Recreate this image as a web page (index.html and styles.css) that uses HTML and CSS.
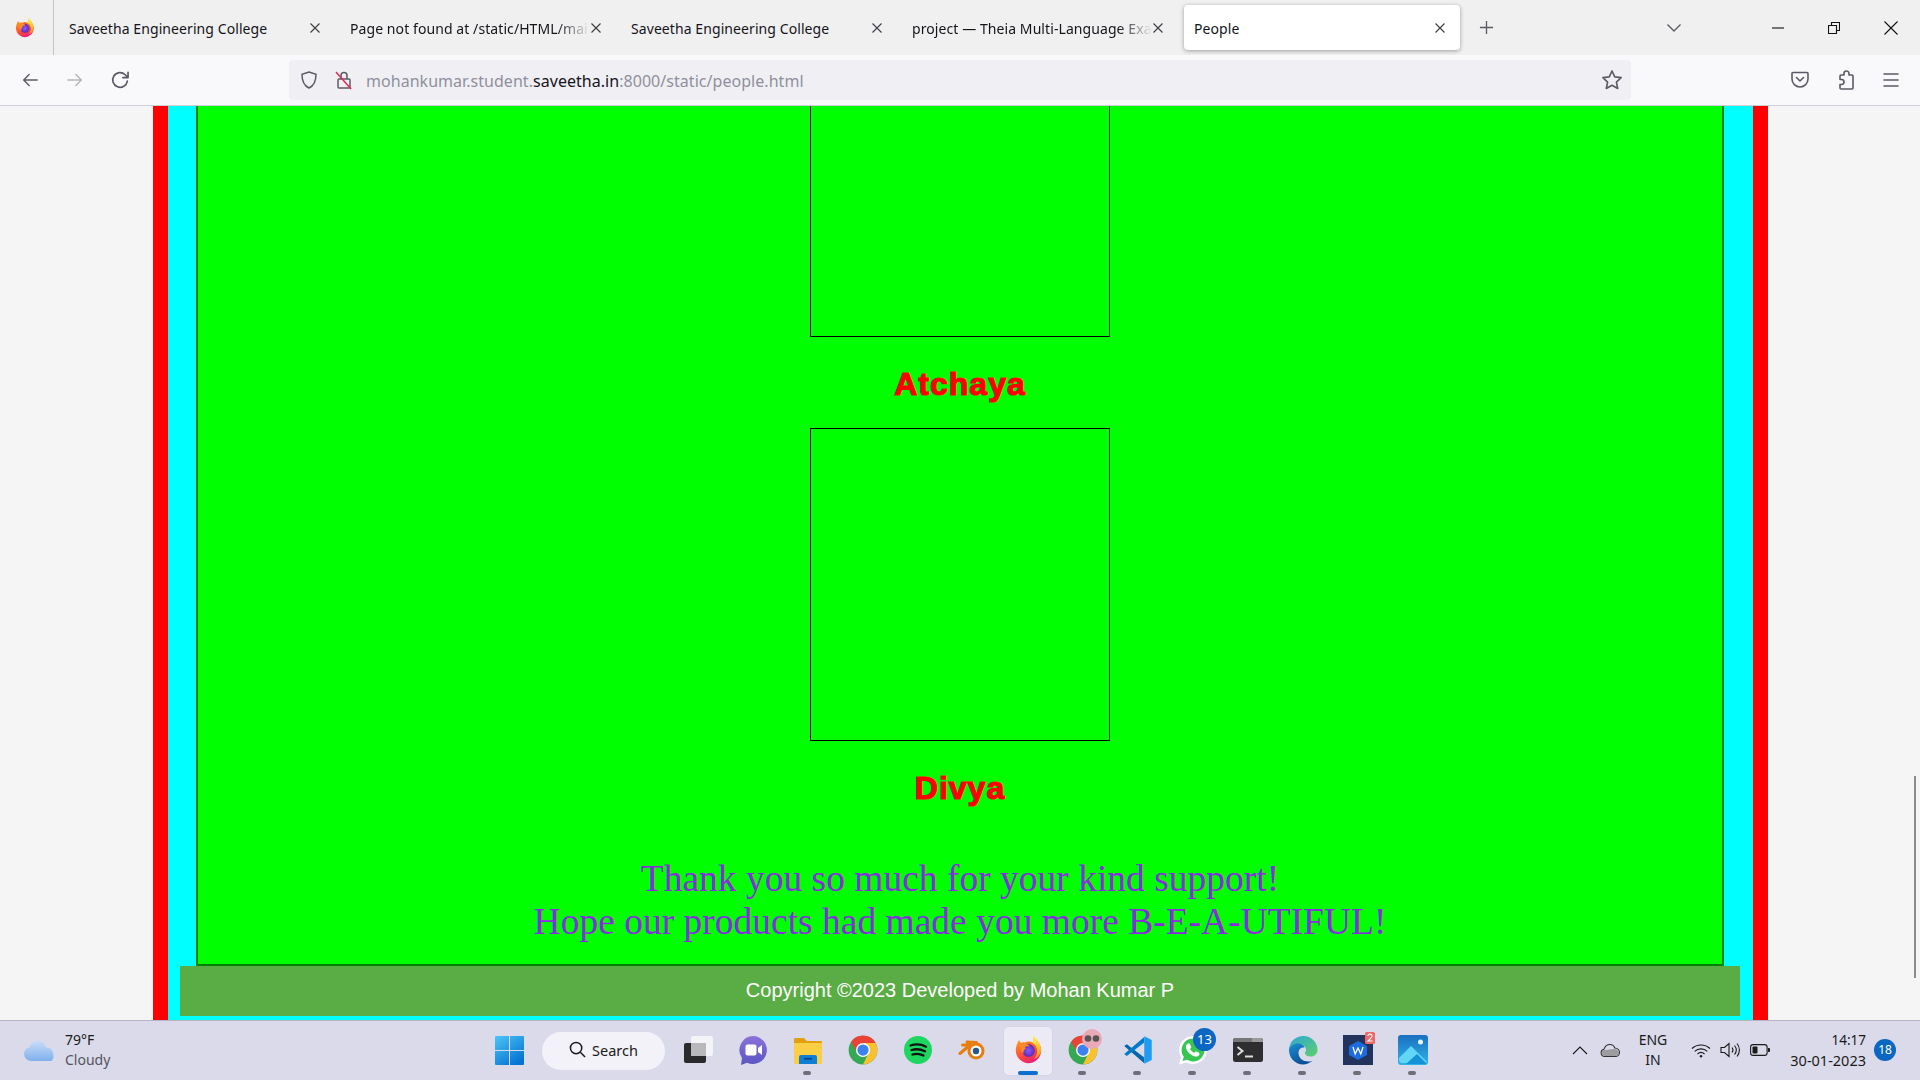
FILE: index.html
```html
<!DOCTYPE html>
<html lang="en">
<head>
<meta charset="utf-8">
<title>People</title>
<link rel="stylesheet" href="styles.css">
</head>
<body>
<svg class="sprite" aria-hidden="true">
  <defs>
    <linearGradient id="g-fox" x1="0.2" y1="0.2" x2="0.6" y2="1"><stop offset="0" stop-color="#ff8a1f"/><stop offset="0.55" stop-color="#ff4a3a"/><stop offset="1" stop-color="#e8207a"/></linearGradient>
    <linearGradient id="g-flame" x1="0.3" y1="0" x2="0.6" y2="1"><stop offset="0" stop-color="#fff44f"/><stop offset="0.6" stop-color="#ffc02a"/><stop offset="1" stop-color="#ff8a1f"/></linearGradient>
    <radialGradient id="g-globe"><stop offset="0" stop-color="#9059ff"/><stop offset="1" stop-color="#5b2bb5"/></radialGradient>
    <linearGradient id="g-win" x1="0" y1="0" x2="0.7" y2="1"><stop offset="0" stop-color="#4cc6f8"/><stop offset="1" stop-color="#0573d2"/></linearGradient>
    <linearGradient id="g-edge" x1="0" y1="0" x2="1" y2="1"><stop offset="0" stop-color="#2ea6d8"/><stop offset="1" stop-color="#5fd06a"/></linearGradient>
    <linearGradient id="g-edge2" x1="0" y1="0" x2="0.5" y2="1"><stop offset="0" stop-color="#1a8fd0"/><stop offset="1" stop-color="#0c4f96"/></linearGradient>
    <linearGradient id="g-cloud" x1="0" y1="0" x2="0" y2="1"><stop offset="0" stop-color="#c8dcf8"/><stop offset="1" stop-color="#7fb0ec"/></linearGradient>
    <linearGradient id="g-photo" x1="0" y1="0" x2="0" y2="1"><stop offset="0" stop-color="#1a6fc0"/><stop offset="1" stop-color="#2fb4e8"/></linearGradient>
    <linearGradient id="g-teams" x1="0" y1="0" x2="0" y2="1"><stop offset="0" stop-color="#8a72d8"/><stop offset="1" stop-color="#5a55c4"/></linearGradient>
    <symbol id="i-firefox" viewBox="0 0 32 32">
      <path fill="url(#g-fox)" d="M3 15c-.6 8 5.600 15 13.400 15C24 30 30 24 30 16.500c0-3-1-5.800-2.500-8C25 4 21.500 2 21.500 2c.9 3 .3 5-.8 6.200C18.500 6.500 15 6.600 12.500 8c-1.500-.4-3-.2-4 .5L6.500 5.500C5 7.500 3.500 11 3 15z"/>
      <path fill="url(#g-flame)" d="M21 .5c1.200 3.500 .9 6.500-.3 7.700 3.500 2 5.300 5.500 5 9.800-.3 3.500-2 6-4 7.800 5-1.300 8.300-5.500 8.300-9.800 0-3-1-5.800-2.500-8C25.500 4.500 23 2 21 .5z"/>
      <circle cx="16.500" cy="16.500" r="6.800" fill="url(#g-globe)"/>
      <path fill="#ff8a2a" d="M6.500 11c2-2.200 5.500-2.800 8-1.500 2 .8 3 2 3.500 3-2-.7-4.500-.5-5.500 .5 1.200 .3 1 1.500 .5 2-1.500 1.200-2.500 2.500-1.500 5-2.500-1.500-5.500-5-5-9z"/>
    </symbol>
    <symbol id="i-chrome" viewBox="0 0 24 24">
      <circle cx="12" cy="12" r="11.500" fill="#34a853"/>
      <path fill="#fbc02d" d="M12 23.500A11.500 11.500 0 0 0 22 6.300L12 6.300l4.500 8z"/>
      <path fill="#ea4335" d="M12 .5A11.500 11.500 0 0 0 2.500 5.500L7.500 14 12 6.300h10A11.500 11.500 0 0 0 12 .5z"/>
      <circle cx="12" cy="12" r="5.600" fill="#fff"/>
      <circle cx="12" cy="12" r="4.500" fill="#3b82f0"/>
    </symbol>
  </defs>
</svg>

<header class="tabstrip">
  <div class="fox-cell"><svg class="fox-small"><use href="#i-firefox"/></svg></div>
  <div class="tab"><span class="tab-title">Saveetha Engineering College</span><svg class="tab-x" viewBox="0 0 12 12"><path d="M1.500 1.500l9 9M10.500 1.500l-9 9"/></svg></div>
  <div class="tab"><span class="tab-title fade">Page not found at /static/HTML/mai</span><svg class="tab-x" viewBox="0 0 12 12"><path d="M1.500 1.500l9 9M10.500 1.500l-9 9"/></svg></div>
  <div class="tab"><span class="tab-title">Saveetha Engineering College</span><svg class="tab-x" viewBox="0 0 12 12"><path d="M1.500 1.500l9 9M10.500 1.500l-9 9"/></svg></div>
  <div class="tab"><span class="tab-title fade">project — Theia Multi-Language Exa</span><svg class="tab-x" viewBox="0 0 12 12"><path d="M1.500 1.500l9 9M10.500 1.500l-9 9"/></svg></div>
  <div class="tab tab-active"><span class="tab-title">People</span><svg class="tab-x" viewBox="0 0 12 12"><path d="M1.500 1.500l9 9M10.500 1.500l-9 9"/></svg></div>
  <svg class="plus" viewBox="0 0 16 16"><path d="M8 1v14M1 8h14"/></svg>
  <svg class="tab-list" viewBox="0 0 16 10"><path d="M1.500 1.500L8 8l6.500-6.500"/></svg>
  <div class="win-btns">
    <svg class="win-icon" viewBox="0 0 12 12"><path d="M0 6h12"/></svg>
    <svg class="win-icon" viewBox="0 0 12 12"><path d="M.5 3.500h8v8h-8zM3.500 3.500v-3h8v8h-3"/></svg>
    <svg class="win-icon win-close" viewBox="0 0 14 14"><path d="M.5 .5l13 13M13.500 .5l-13 13"/></svg>
  </div>
</header>

<nav class="toolbar">
  <svg class="tool tool-back" viewBox="0 0 20 20"><path d="M18 10H3M9 4l-6 6 6 6"/></svg>
  <svg class="tool tool-fwd" viewBox="0 0 20 20"><path d="M2 10h15M11 4l6 6-6 6"/></svg>
  <svg class="tool tool-reload" viewBox="0 0 20 20"><path d="M16.500 10.500a7 7 0 1 1-2-6l2.500 2.500M17.200 2.200v5h-5"/></svg>
  <div class="urlbar">
    <svg class="shield" viewBox="0 0 20 20"><path d="M10 2l7 2.200c0 7-1.500 11.300-7 13.800C4.500 15.500 3 11.200 3 4.200z"/></svg>
    <svg class="lock" viewBox="0 0 20 20"><path class="lock-body" d="M5 9h10a1 1 0 0 1 1 1v7a1 1 0 0 1-1 1H5a1 1 0 0 1-1-1v-7a1 1 0 0 1 1-1zM7 9V5.500a3 3 0 0 1 6 0V9"/><path class="lock-slash" d="M2 2l15 17"/></svg>
    <span class="url"><span class="url-dim">mohankumar.student.</span>saveetha.in<span class="url-dim">:8000/static/people.html</span></span>
    <svg class="star" viewBox="0 0 20 20"><path d="M10 1.800l2.500 5.400 5.800.7-4.300 4 1.200 5.800-5.200-2.900-5.200 2.900 1.200-5.800-4.300-4 5.800-.7z"/></svg>
  </div>
  <svg class="tool tool-pocket" viewBox="0 0 20 20"><path d="M3 2.500h14a1 1 0 0 1 1 1V9a8 8 0 0 1-16 0V3.500a1 1 0 0 1 1-1zM6.500 7.500L10 11l3.500-3.500"/></svg>
  <svg class="tool tool-ext" viewBox="0 0 20 20"><path d="M8 5V3.500a2.500 2.500 0 0 1 5 0V5h3a1 1 0 0 1 1 1v12a1 1 0 0 1-1 1H5a1 1 0 0 1-1-1v-3.500h1.500a2.500 2.500 0 0 0 0-5H4V6a1 1 0 0 1 1-1z"/></svg>
  <svg class="tool tool-menu" viewBox="0 0 20 20"><path d="M3 4h14M3 10h14M3 16h14"/></svg>
</nav>

<main class="viewport">
  <div class="frame-red">
    <div class="frame-cyan">
      <section class="panel">
        <div class="photo photo-cut"></div>
        <h2 class="name">Atchaya</h2>
        <div class="photo"></div>
        <h2 class="name">Divya</h2>
        <p class="thanks">Thank you so much for your kind support!<br>Hope our products had made you more B-E-A-UTIFUL!</p>
      </section>
      <footer class="copyright">Copyright ©2023 Developed by Mohan Kumar P</footer>
    </div>
  </div>
  <div class="scroll-thumb"></div>
</main>

<div class="taskbar">
  <div class="weather">
    <svg class="weather-cloud" viewBox="1 1 26 18" preserveAspectRatio="none"><path fill="url(#g-cloud)" d="M7 19a6 6 0 0 1-1.500-11.800C7 2.500 13 0 17 3.500c1.500 1 2 2.500 2.500 4a5.500 5.500 0 0 1 6 5.500A6 6 0 0 1 24 19z"/></svg>
    <div class="weather-text"><span class="temp">79°F</span><span class="cond">Cloudy</span></div>
  </div>
  <div class="center">
    <svg class="start" viewBox="0 0 29 29"><path fill="url(#g-win)" d="M1 0h13v14H0V1a1 1 0 0 1 1-1zM15 0h13a1 1 0 0 1 1 1v13H15zM0 15h14v14H1a1 1 0 0 1-1-1zM15 15h14v13a1 1 0 0 1-1 1H15z"/></svg>
    <div class="search">
      <svg class="search-icon" viewBox="0 0 18 18"><circle cx="7.500" cy="7.500" r="6"/><path d="M12 12l5 5"/></svg>
      <span>Search</span>
    </div>
    <div class="task"><svg class="ic" viewBox="0 0 30 30"><rect x="1" y="8" width="22" height="20" rx="2" fill="#2a2a2a"/><rect x="8" y="1" width="22" height="20" rx="2" fill="#f4f4f6"/><rect x="8" y="8" width="15" height="13" fill="#b9b9bc"/></svg></div>
    <div class="task"><svg class="ic" viewBox="0 0 30 30"><path fill="url(#g-teams)" d="M15 1a14 14 0 1 1-6 26.700L3 30l1-7A14 14 0 0 1 15 1z"/><rect x="7.500" y="9.500" width="11" height="11" rx="2" fill="#fff"/><path fill="#fff" d="M20 13l4-3v10l-4-3z"/></svg></div>
    <div class="task running"><svg class="ic" viewBox="0 0 30 30"><path fill="#e0a010" d="M1 4a1 1 0 0 1 1-1h9l3 3h14a1 1 0 0 1 1 1v3H1z"/><path fill="#fbcf45" d="M1 8h28v20a1 1 0 0 1-1 1H2a1 1 0 0 1-1-1z"/><path fill="#0f7fd6" d="M6 22a2 2 0 0 1 2-2h14a2 2 0 0 1 2 2v7H6z"/><rect x="11" y="23" width="8" height="1.500" fill="#053f7c"/></svg></div>
    <div class="task"><svg class="ic"><use href="#i-chrome"/></svg></div>
    <div class="task"><svg class="ic" viewBox="0 0 30 30"><circle cx="15" cy="15" r="14" fill="#1ed760"/><path d="M7.500 10.500c5-1.500 11-1.200 15.500 1.200M8.500 15c4.500-1.200 9.500-.8 13.500 1.300M9.500 19.500c3.700-1 8-.7 11 1" fill="none" stroke="#111" stroke-width="2.300" stroke-linecap="round"/></svg></div>
    <div class="task"><svg class="ic" viewBox="0 0 30 30"><path d="M2 18.500l10-8.500H4.500M9 7l9.500 .5" fill="none" stroke="#e87d0d" stroke-width="3" stroke-linecap="round" stroke-linejoin="round"/><circle cx="18" cy="16" r="8.500" fill="#e87d0d"/><circle cx="18" cy="16" r="5.500" fill="#fff"/><circle cx="18" cy="16" r="3.200" fill="#265787"/></svg></div>
    <div class="task task-on"><svg class="ic ic-fox"><use href="#i-firefox"/></svg></div>
    <div class="task running task-badged">
      <svg class="ic"><use href="#i-chrome"/></svg>
      <svg class="avatar" viewBox="0 0 20 20"><circle cx="10" cy="10" r="10" fill="#eaa9b6"/><circle cx="6" cy="9.500" r="3.300" fill="#555"/><circle cx="14" cy="9.500" r="3.300" fill="#555"/></svg>
    </div>
    <div class="task running"><svg class="ic" viewBox="0 0 24 24"><polygon fill="#0065a9" points="1,8.800 3,7.300 17,18 17,22.500"/><polygon fill="#007acc" points="1,15.200 3,16.700 17,6 17,1.500"/><polygon fill="#1f9cf0" points="17,1 23,4 23,20 17,23"/></svg></div>
    <div class="task running task-badged">
      <svg class="ic" viewBox="0 0 30 30"><path fill="#fff" d="M15 1a14 14 0 1 1-6.500 26.400L1 29.500l2-7.500A14 14 0 0 1 15 1z"/><path fill="#38c652" d="M15 3.500a11.500 11.500 0 1 1-6 21.300l-4.500 1.300 1.300-4.400A11.500 11.500 0 0 1 15 3.500z"/><path fill="#fff" d="M10.800 8.500c.5 0 1 0 1.200.7l1.200 2.800c.1.400 0 .8-.3 1.100l-.9 1c.9 1.700 2.400 3 4.200 3.800l1-1.100c.3-.4.700-.4 1.100-.3l2.600 1.300c.5.200.6 .6 .5 1.100-.3 1.900-2 2.800-3.700 2.600-4.500-.6-9.100-5-9.800-9.300-.2-1.700 .9-3.700 2.900-3.700z"/></svg>
      <span class="count">13</span>
    </div>
    <div class="task running"><svg class="ic" viewBox="0 0 30 30"><rect x="0" y="3" width="30" height="24" rx="2.500" fill="#2e2e2e"/><path d="M0 5.500A2.500 2.500 0 0 1 2.500 3H19v4H0z" fill="#777"/><path d="M19 3h8.500A2.500 2.500 0 0 1 30 5.500V7H19z" fill="#9a9a9a"/><path d="M4.500 12l5 4-5 4" fill="none" stroke="#ddd" stroke-width="2"/><path d="M12 21.500h8" stroke="#ddd" stroke-width="2"/></svg></div>
    <div class="task running"><svg class="ic" viewBox="0 0 30 30"><path fill="url(#g-edge)" d="M1 14C2 6 8 1 15.500 1 23 1 29.500 7 29.500 15c0 4-3 6.500-6.500 6.500-3 0-6-1-6-3.500 0-1 1-1.500 1-3 0-4-4-6.500-8-6C6 9.500 3 11 1 14z"/><path fill="url(#g-edge2)" d="M1 14c2-4 6-5.500 9-5.500 3 0 6 1.500 6.500 4-2.500-.5-6 1-6 5.500 0 5 4.500 8.500 10 8.500 1.500 0 3-.3 4-.8C21.500 28 18.500 29.500 15 29.500 7 29.500 .5 22.500 1 14z"/></svg></div>
    <div class="task running task-badged">
      <svg class="ic" viewBox="0 0 30 30"><rect width="30" height="30" fill="#22335c"/><polygon points="15,6 24,11 24,20 15,25 6,20 6,11" fill="#1c6ce0"/><path d="M10 12l2.200 7 2.800-6 2.800 6 2.200-7" fill="none" stroke="#fff" stroke-width="1.300"/></svg>
      <svg class="wps-tag" viewBox="0 0 10 12"><rect width="10" height="12" rx="1.500" fill="#ea6a6a"/><path d="M3 4a2 2 0 1 1 3.200 1.600L3 9h4.500" fill="none" stroke="#fff" stroke-width="1.100"/></svg>
    </div>
    <div class="task running"><svg class="ic" viewBox="0 0 30 30"><rect width="30" height="30" rx="3" fill="url(#g-photo)"/><circle cx="22.500" cy="7" r="2.500" fill="#e8f4fc"/><path fill="#63d5f5" d="M1 23L13 11l16 16a3 3 0 0 1-2 1H4a3 3 0 0 1-3-3z"/><path fill="#1492d8" d="M8 29l11-10 9 9v1z"/></svg></div>
  </div>
  <div class="tray">
    <svg class="tray-ic chevron-up" viewBox="0 0 16 10"><path d="M1 9l7-7 7 7"/></svg>
    <svg class="tray-ic cloud" viewBox="0 0 20 13"><path d="M4.500 12.500a3.700 3.700 0 0 1-.5-7.300C5 2.200 7.500.5 10 .5c2.300 0 4 1.400 4.800 3.500 2.700.2 4.700 2.200 4.700 4.500 0 2.300-1.800 4-4 4z"/><path class="cloud-fill" d="M4.500 12a3.200 3.200 0 0 1-.2-6.300C7 6.500 12 4.500 15 5c2.500.5 4 2 4 3.500 0 2-1.500 3.500-3.500 3.500z"/></svg>
    <div class="lang"><span>ENG</span><span>IN</span></div>
    <svg class="tray-ic wifi" viewBox="0 0 20 15"><path d="M1 5.500c5-4.700 13-4.700 18 0M3.700 8.300c3.500-3.200 9.100-3.200 12.600 0M6.500 11c2-1.800 5-1.800 7 0"/><circle cx="10" cy="13.300" r="1.200"/></svg>
    <svg class="tray-ic vol" viewBox="0 0 20 16"><path d="M1 5.500h3.500L9 1.500v13l-4.500-4H1zM12 5.500c1.200 1.500 1.200 3.500 0 5M14.500 3.500c2.200 2.700 2.200 6.300 0 9M17 1.500c3.200 3.800 3.200 9.200 0 13"/></svg>
    <svg class="tray-ic battery" viewBox="0 0 20 12"><rect x=".6" y=".6" width="16.500" height="10.800" rx="2.500"/><rect class="bat-fill" x="2.500" y="2.500" width="5" height="7" rx="1"/><path class="bat-tip" d="M18 4h1a1 1 0 0 1 1 1v2a1 1 0 0 1-1 1h-1z"/></svg>
    <div class="clock"><span class="clock-time">14:17</span><span>30-01-2023</span></div>
    <span class="notif">18</span>
  </div>
</div>
</body>
</html>
```
FILE: styles.css
```css
* { box-sizing: border-box; }
html, body { margin: 0; height: 100%; }
body {
  display: flex;
  flex-direction: column;
  height: 100vh;
  overflow: hidden;
  font-family: "Noto Sans", "Open Sans", sans-serif;
  background: #f5f5f5;
}
.sprite { display: block; width: 0; height: 0; }

/* tab strip */
.tabstrip {
  height: 55px;
  flex: none;
  display: flex;
  align-items: center;
  background: #f0f0f1;
  color: #15141a;
  font-size: 14px;
  letter-spacing: .08px;
}
.fox-cell {
  width: 54px;
  height: 55px;
  flex: none;
  display: flex;
  align-items: center;
  justify-content: center;
  border-right: 1px solid #c4c4c6;
  padding-right: 5px;
}
.fox-small { width: 21px; height: 24px; }
.tab {
  width: 281px;
  height: 45px;
  flex: none;
  display: flex;
  align-items: center;
  padding: 1px 8px 0 15px;
}
.tab-title { flex: 1; min-width: 0; white-space: nowrap; overflow: hidden; }
.fade {
  -webkit-mask-image: linear-gradient(to right, #000 86%, transparent 100%);
  mask-image: linear-gradient(to right, #000 86%, transparent 100%);
}
.tab-x { width: 12px; height: 12px; flex: none; margin-right: 6px; margin-top: -1px; }
.tab-x path { stroke: #3c3c40; stroke-width: 1.100; fill: none; }
.tab-active {
  width: 276px;
  margin-left: 6px;
  background: #fff;
  border-radius: 4px;
  box-shadow: 0 1px 4px rgba(0, 0, 0, .35);
  padding: 1px 14px 0 10px;
}
.tab-active .tab-x { margin-right: 0; }
.plus { width: 15px; height: 15px; margin-left: 19px; flex: none; }
.plus path { stroke: #5b5b66; stroke-width: 1.400; fill: none; }
.tab-list { width: 16px; height: 10px; margin-left: 172px; flex: none; }
.tab-list path { stroke: #5b5b66; stroke-width: 1.400; fill: none; }
.win-btns { margin-left: auto; display: flex; align-items: center; gap: 44px; padding-right: 22px; }
.win-icon { width: 12px; height: 12px; }
.win-icon path { stroke: #111; stroke-width: 1.100; fill: none; }
.win-close { width: 14px; height: 14px; }

/* toolbar */
.toolbar {
  height: 51px;
  flex: none;
  display: flex;
  align-items: center;
  background: #f9f9fb;
  border-bottom: 1px solid #cfcfd8;
  padding-left: 21px;
}
.tool { width: 18px; height: 18px; flex: none; fill: none; stroke: #5b5b66; stroke-width: 1.600; stroke-linecap: round; stroke-linejoin: round; }
.tool-fwd { margin-left: 27px; stroke: #b4b4ba; }
.tool-reload { width: 21px; height: 21px; margin-left: 26px; }
.urlbar {
  width: 1342px;
  height: 40px;
  margin-left: 158px;
  margin-right: 159px;
  flex: none;
  display: flex;
  align-items: center;
  background: #f0f0f4;
  border-radius: 4px;
  padding: 0 8px 0 10px;
  color: #15141a;
  font-size: 16px;
  letter-spacing: .04px;
}
.shield { width: 20px; height: 20px; flex: none; fill: none; stroke: #5b5b66; stroke-width: 1.500; }
.lock { width: 20px; height: 20px; margin-left: 15px; flex: none; fill: none; }
.lock-body { stroke: #5b5b66; stroke-width: 1.500; }
.lock-slash { stroke: #e22850; stroke-width: 1.500; }
.url { margin-left: 12px; flex: 1; white-space: nowrap; padding-top: 1px; }
.url-dim { color: #8f8f9d; }
.star { width: 22px; height: 22px; flex: none; fill: none; stroke: #5b5b66; stroke-width: 1.500; stroke-linejoin: round; }
.tool-pocket { width: 20px; height: 20px; }
.tool-ext { margin-left: 26px; width: 20px; height: 20px; }
.tool-menu { margin-left: 25px; width: 20px; height: 20px; }

/* page */
.viewport {
  flex: 1;
  min-height: 0;
  position: relative;
  display: flex;
  background: #f5f5f5;
}
.frame-red {
  width: 1615px;
  margin-left: 153px;
  background: #f00;
  padding: 0 15px;
}
.frame-cyan {
  height: 100%;
  background: #0ff;
  padding: 0 13px 4px 12px;
  display: flex;
  flex-direction: column;
}
.panel {
  flex: 1;
  min-height: 0;
  margin: 0 16px;
  background: #0f0;
  border: 2px solid #008000;
  border-top: 0;
  display: flex;
  flex-direction: column;
  align-items: center;
}
.photo {
  width: 300px;
  height: 313px;
  flex: none;
  border: 1.500px solid #000;
}
.photo-cut { height: 231px; border-top: 0; }
.name {
  margin: 0;
  height: 91px;
  flex: none;
  padding-top: 3px;
  font-family: "Liberation Sans", Arial, sans-serif;
  font-weight: 700;
  font-size: 32px;
  line-height: 88px;
  color: #f00;
  -webkit-text-stroke: 1.200px #f00;
  letter-spacing: 1px;
}
.thanks {
  margin: 25px 0 0;
  font-family: "Liberation Serif", "Times New Roman", serif;
  font-size: 37.500px;
  line-height: 43px;
  text-align: center;
  color: #8a2be2;
}
.copyright {
  height: 50px;
  flex: none;
  background: #5aac44;
  color: #fff;
  font-family: "Liberation Sans", Arial, sans-serif;
  font-size: 20px;
  line-height: 48px;
  text-align: center;
}
.scroll-thumb {
  position: absolute;
  left: 1914px;
  top: 670px;
  width: 2px;
  height: 202px;
  background: #8c8c8c;
}

/* taskbar */
.taskbar {
  height: 60px;
  flex: none;
  display: flex;
  align-items: center;
  background: #dbdaea;
  border-top: 1px solid #b5b3c4;
  color: #1a1a1a;
  font-size: 14px;
}
.weather { width: 495px; flex: none; display: flex; align-items: center; padding-left: 24px; }
.weather-cloud { width: 31px; height: 21px; flex: none; }
.weather-text { display: flex; flex-direction: column; margin-left: 10px; line-height: 20px; margin-top: -1px; }
.cond { color: #55555c; }
.center { display: flex; align-items: center; flex: none; }
.start { width: 29px; height: 29px; flex: none; }
.search {
  width: 123px;
  height: 38px;
  flex: none;
  margin-left: 18px;
  margin-right: 5px;
  padding-bottom: 2px;
  border-radius: 19px;
  background: #f3f2f9;
  display: flex;
  align-items: center;
  justify-content: center;
  gap: 6px;
  font-size: 14.500px;
}
.search-icon { width: 17px; height: 17px; fill: none; stroke: #1a1a1a; stroke-width: 1.600; }
.task {
  width: 55px;
  height: 48px;
  flex: none;
  position: relative;
  display: flex;
  align-items: center;
  justify-content: center;
  padding-bottom: 2px;
}
.ic { width: 30px; height: 30px; }
.ic-fox { width: 30px; height: 32px; }
.running::after {
  content: "";
  position: absolute;
  left: 23px;
  bottom: 0;
  width: 8px;
  height: 4px;
  border-radius: 2px;
  background: #6e6e78;
}
.task-on { background: #ecebf5; border-radius: 4px; width: 48px; margin: 0 3.500px; box-shadow: 0 0 1px rgba(0,0,0,.2); }
.task-on::after {
  content: "";
  position: absolute;
  left: 14px;
  bottom: 0;
  width: 20px;
  height: 4px;
  border-radius: 2px;
  background: #0b6fd0;
}
.avatar { position: absolute; left: 27px; top: 2px; width: 20px; height: 20px; }
.count {
  position: absolute;
  left: 28px;
  top: 1px;
  width: 23px;
  height: 23px;
  border-radius: 50%;
  background: #0b67c2;
  color: #fff;
  font-size: 13px;
  line-height: 23px;
  text-align: center;
}
.wps-tag { position: absolute; left: 35px; top: 5px; width: 10px; height: 12px; }
.tray { flex: 1; display: flex; align-items: center; padding-left: 132px; margin-top: -1px; }
.tray-ic { flex: none; fill: none; stroke: #1a1a1a; stroke-width: 1.100; }
.chevron-up { width: 16px; height: 10px; }
.cloud { width: 20px; height: 13px; margin-left: 12px; stroke: #333; }
.cloud-fill { fill: #9c9c9f; stroke: none; }
.lang { width: 44px; margin-left: 11px; display: flex; flex-direction: column; align-items: center; line-height: 20px; font-size: 14px; }
.wifi { width: 20px; height: 15px; margin-left: 16px; }
.wifi circle { fill: #1a1a1a; stroke: none; }
.vol { width: 20px; height: 16px; margin-left: 9px; }
.battery { width: 20px; height: 12px; margin-left: 10px; }
.bat-fill, .bat-tip { fill: #1a1a1a; stroke: none; }
.clock { width: 96px; display: flex; flex-direction: column; align-items: flex-end; line-height: 20px; font-size: 14.500px; }
.clock-time { font-size: 13.500px; }
.notif {
  width: 22px;
  height: 22px;
  margin-left: 8px;
  border-radius: 50%;
  background: #0b67c2;
  color: #fff;
  font-size: 12px;
  line-height: 22px;
  text-align: center;
}
```
